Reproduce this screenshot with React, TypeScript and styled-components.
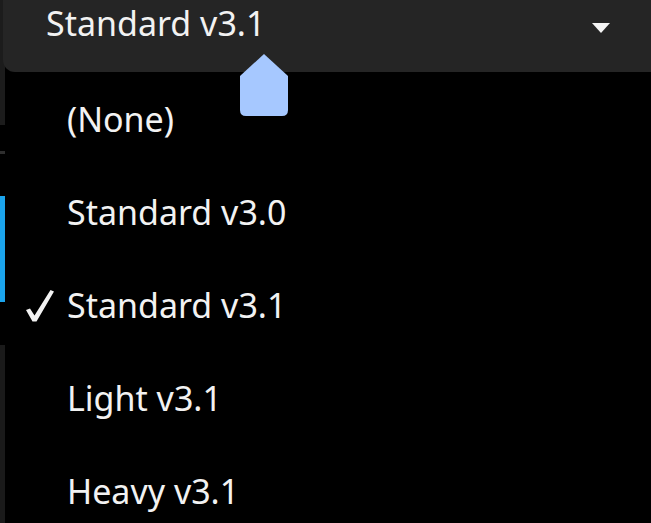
import React from "react";
import styled, { createGlobalStyle } from "styled-components";

const GlobalStyle = createGlobalStyle`
  html, body {
    margin: 0;
    padding: 0;
    background: #000;
  }
  body {
    font-family: "Noto Sans", "Open Sans", sans-serif;
    overflow: hidden;
  }
`;

const options = ["(None)", "Standard v3.0", "Standard v3.1", "Light v3.1", "Heavy v3.1"];
const selected = "Standard v3.1";

const railSegments = [
  { h: 125, color: "#1c1c1c" },
  { h: 26, color: "#000" },
  { h: 3, color: "#2e2e2e" },
  { h: 42, color: "#000" },
  { h: 106, color: "#1ba4ec" },
  { h: 43, color: "#000" },
  { h: 178, color: "#1a1a1a" },
];

const CheckIcon = () => (
  <CheckSvg viewBox="0 0 28 32">
    <path d="M0 20 L4 18.5 L8.5 25.5 L24.5 0 L28 1.5 L10.5 31.5 L6.5 31.5 Z" fill="#f2f2f2" />
  </CheckSvg>
);

const App: React.FC = () => {
  return (
    <Page>
      <GlobalStyle />
      <Rail>
        {railSegments.map((s, i) => (
          <RailSegment key={i} h={s.h} color={s.color} />
        ))}
      </Rail>
      <Main>
        <Header>
          <HeaderLabel>{selected}</HeaderLabel>
          <Caret />
        </Header>
        <Menu>
          {options.map(o => (
            <Item key={o}>
              <CheckSlot>{o === selected && <CheckIcon />}</CheckSlot>
              <ItemLabel>{o}</ItemLabel>
            </Item>
          ))}
        </Menu>
        <Handle viewBox="0 0 48 62">
          <path d="M24 0 L48 22 L48 56 Q48 62 42 62 L6 62 Q0 62 0 56 L0 22 Z" fill="#a6c8ff" />
        </Handle>
      </Main>
    </Page>
  );
};

const Page = styled.div`
  width: 651px;
  height: 523px;
  display: flex;
  background: #000;
  overflow: hidden;
`;

const Rail = styled.div`
  width: 5px;
  flex-shrink: 0;
  display: flex;
  flex-direction: column;
`;

const RailSegment = styled.div<{ h: number; color: string }>`
  height: ${p => p.h}px;
  background: ${p => p.color};
  flex-shrink: 0;
`;

const Main = styled.div`
  position: relative;
  flex: 1;
  display: flex;
  flex-direction: column;
  min-height: 0;
`;

const Header = styled.div`
  height: 72px;
  flex-shrink: 0;
  margin-left: -2px;
  background: #252525;
  border-bottom-left-radius: 12px;
  display: flex;
  align-items: flex-start;
  justify-content: space-between;
  padding: 7px 41px 0 43px;
  box-sizing: border-box;
`;

const Label = styled.span`
  color: #f2f2f2;
  font-size: 34px;
  line-height: 1.1;
  white-space: nowrap;
`;

const HeaderLabel = styled(Label)`
  margin-top: -2px;
`;

const ItemLabel = styled(Label)``;

const Caret = styled.span`
  width: 0;
  height: 0;
  margin-top: 16px;
  border-left: 9px solid transparent;
  border-right: 9px solid transparent;
  border-top: 10px solid #f4f4f4;
`;

const Menu = styled.div`
  flex: 1;
  background: #000;
  border-top-left-radius: 12px;
  padding-top: 1px;
  display: flex;
  flex-direction: column;
`;

const Item = styled.div`
  height: 93px;
  display: flex;
  align-items: center;
  flex-shrink: 0;
`;

const CheckSlot = styled.span`
  width: 62px;
  height: 32px;
  padding-left: 21px;
  box-sizing: border-box;
  display: flex;
  align-items: flex-start;
  margin-top: 1px;
`;

const CheckSvg = styled.svg`
  width: 28px;
  height: 32px;
`;

const Handle = styled.svg`
  position: absolute;
  left: 235px;
  top: 54px;
  width: 48px;
  height: 62px;
`;

export default App;
